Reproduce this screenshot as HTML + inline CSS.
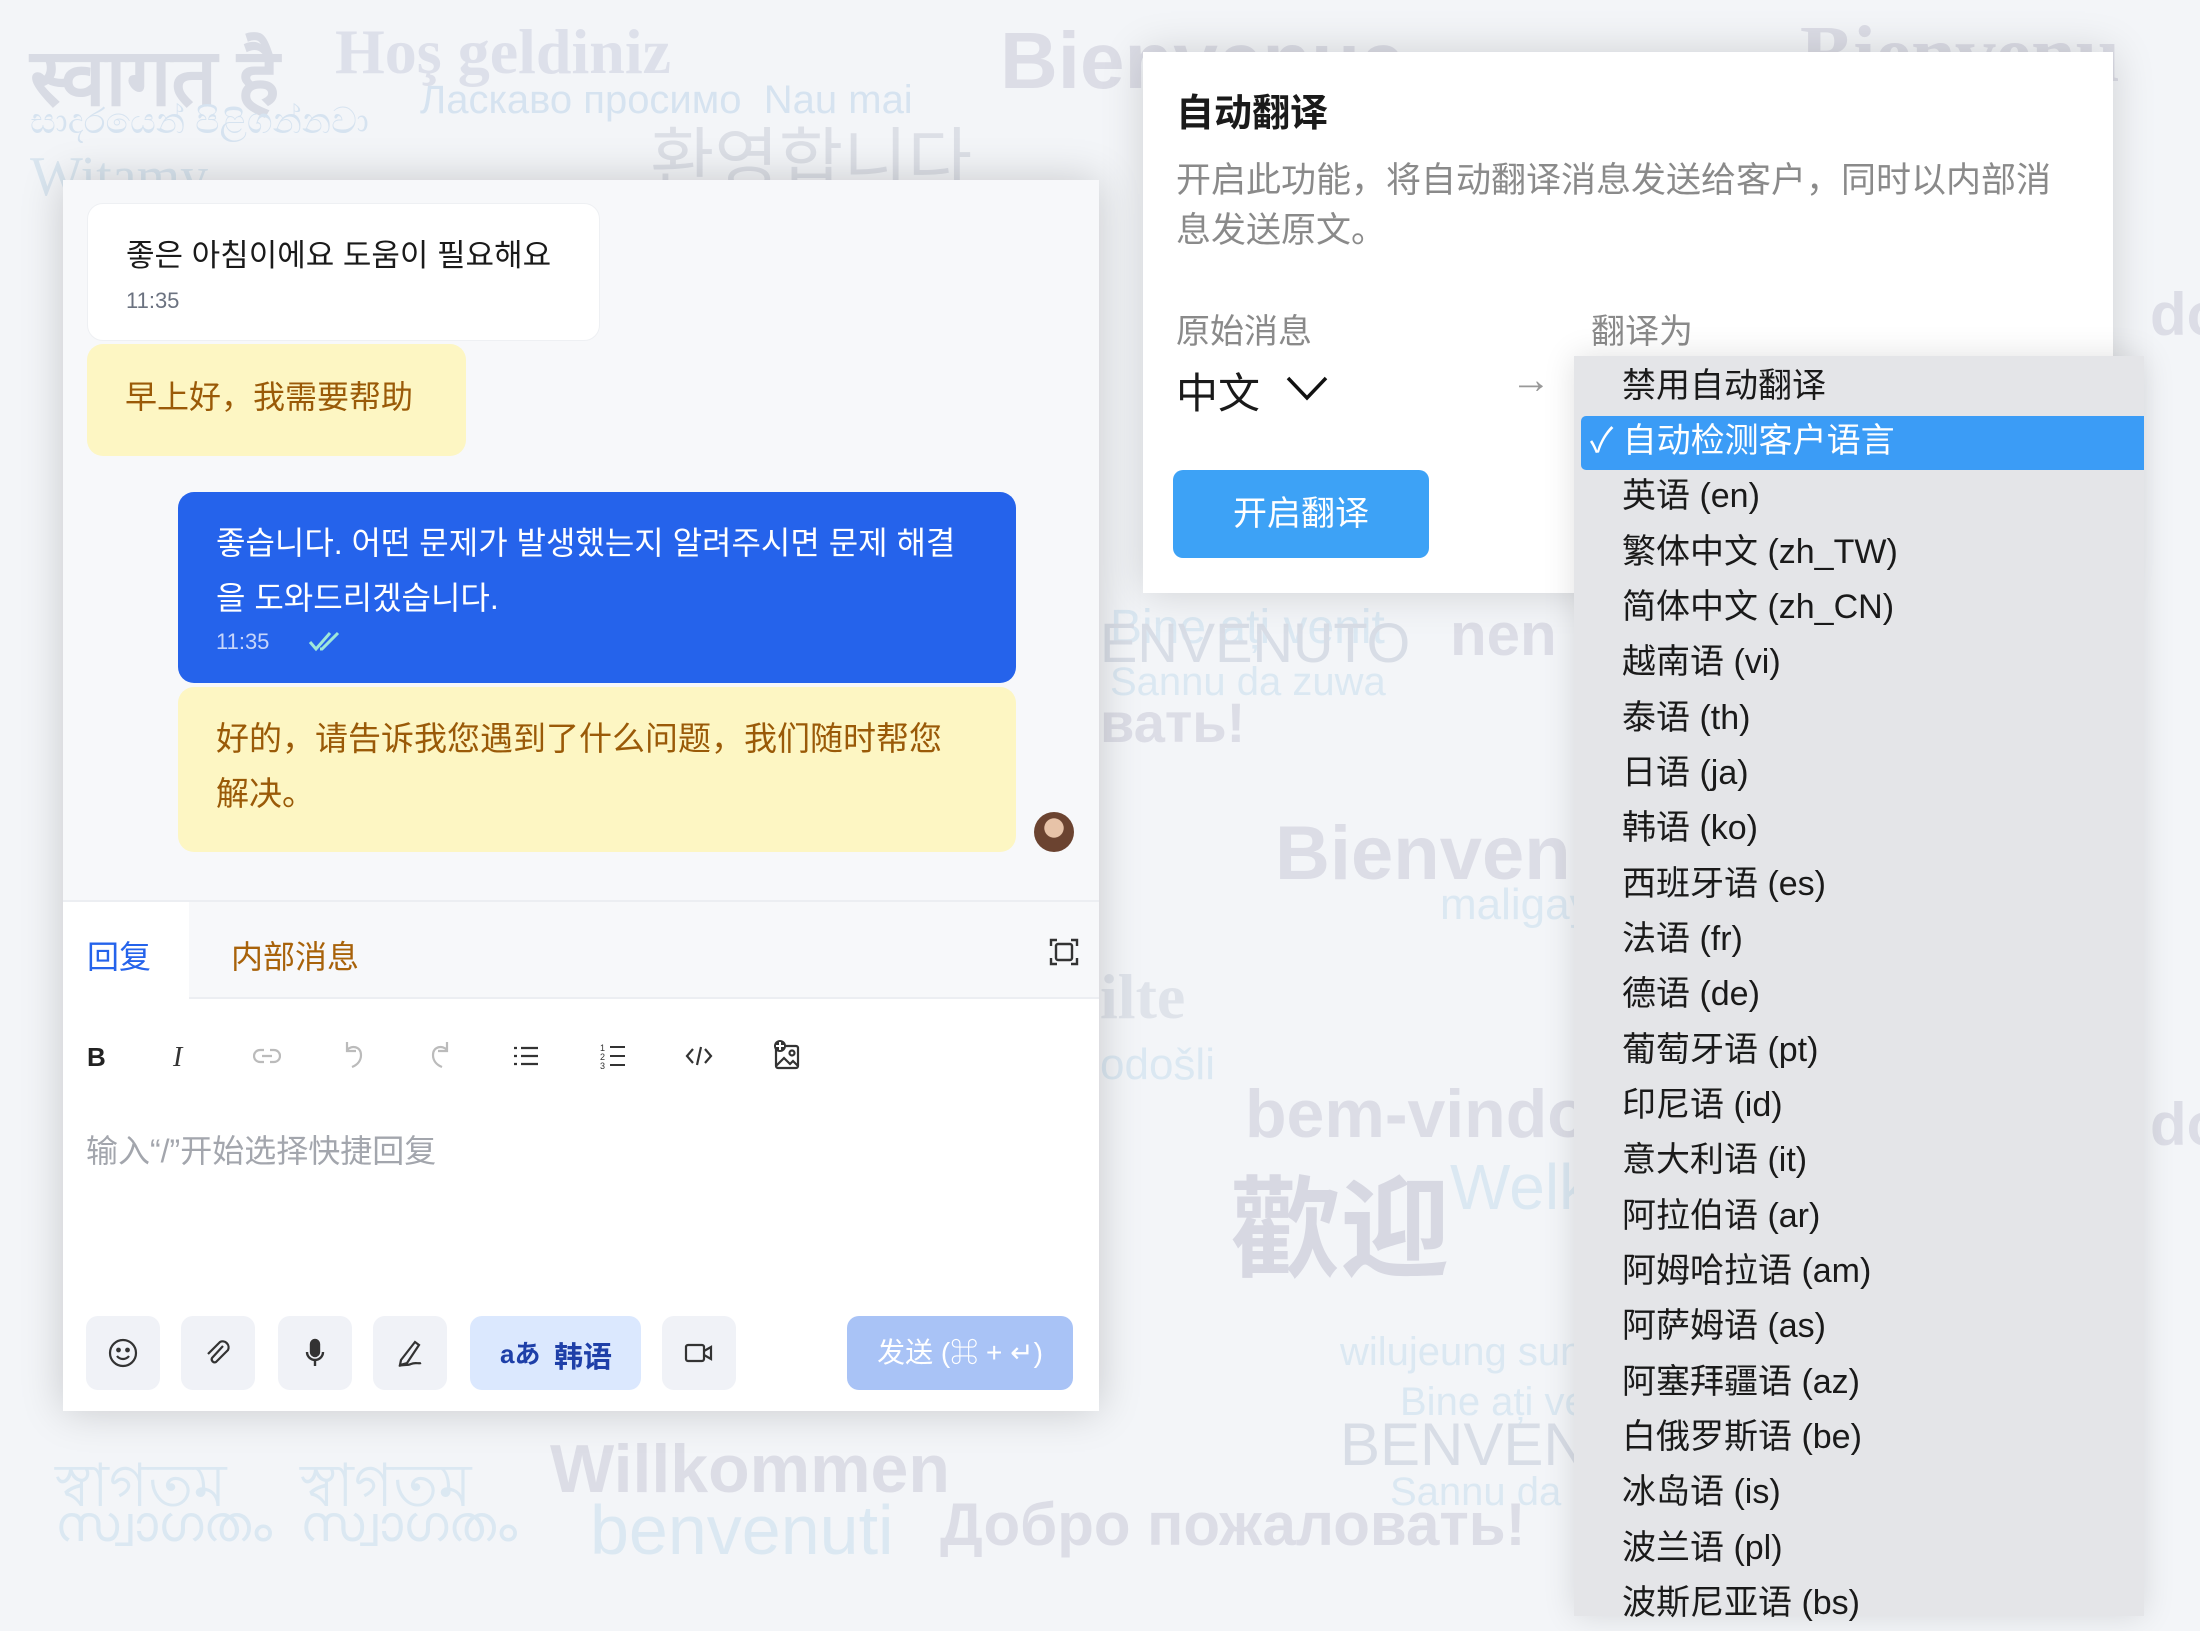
<!DOCTYPE html>
<html><head><meta charset="utf-8">
<style>
*{margin:0;padding:0;box-sizing:border-box}
body{width:2200px;height:1600px;overflow:hidden;background:#f3f5f8;font-family:"Liberation Sans","Noto Sans CJK SC",sans-serif;position:relative}
.bg{position:absolute;white-space:nowrap;font-weight:bold;color:#dfe2ea;font-family:"Liberation Serif","Noto Sans CJK SC",serif}
.bgs{position:absolute;white-space:nowrap;color:#dbe8f2;font-family:"Liberation Sans","Noto Sans CJK SC",sans-serif}
.abs{position:absolute}
.cn{font-family:"Liberation Sans","Noto Sans CJK SC",sans-serif}
.kr{font-family:"Liberation Sans","Noto Sans CJK KR",sans-serif}
.chat{position:absolute;left:63px;top:180px;width:1036px;height:1231px;background:#fff;box-shadow:0 0 40px rgba(0,0,0,.18)}
.msgs{position:absolute;left:0;top:0;width:1036px;height:722px;background:#f7f8fa;border-bottom:2px solid #eceef2}
.b{position:absolute;border-radius:16px}
.ib{position:absolute;top:1136px;width:74px;height:74px;border-radius:12px;background:#f0f2f7}
.ib svg{position:absolute;left:22px;top:22px}
.tb{position:absolute;top:862px}
.dd div{position:absolute;left:48px;height:55px;line-height:55px;font-size:34px;color:#1a1a1a;white-space:nowrap}
</style></head><body>
<div class="bg" style="left:30px;top:20px;font-size:80px;color:#d8dbe4">स्वागत है</div>
<div class="bg" style="left:335px;top:15px;font-size:64px;color:#dde0ea">Hoş geldiniz</div>
<div class="bg cn" style="left:1000px;top:15px;font-size:80px;color:#dcdde6">Bienvenue</div>
<div class="bgs" style="left:420px;top:78px;font-size:40px;color:#d6e3f0">Ласкаво просимо &nbsp;Nau mai</div>
<div class="bgs" style="left:30px;top:100px;font-size:36px;color:#d6e3f0">සාදරයෙන් පිළිගන්නවා</div>
<div class="bgs kr" style="left:650px;top:105px;font-size:70px;color:#dcdfe6">환영합니다</div>
<div class="bg" style="left:30px;top:145px;font-size:56px;color:#d9e5ef;font-weight:normal">Witamy</div>
<div class="bg" style="left:1800px;top:10px;font-size:80px;color:#dcdde6">Bienvenu</div>
<div class="bgs" style="left:1110px;top:600px;font-size:48px">Bine ați venit</div>
<div class="bgs" style="left:1100px;top:610px;font-size:56px;color:#d8dde6">ENVENUTO</div>
<div class="bgs" style="left:1110px;top:660px;font-size:40px">Sannu da zuwa</div>
<div class="bg" style="left:1100px;top:690px;font-size:56px;color:#dcdde6;font-family:'Liberation Sans'">вать!</div>
<div class="bg" style="left:1450px;top:600px;font-size:60px;color:#dcdde6;font-family:'Liberation Sans'">nen</div>
<div class="bg" style="left:1275px;top:810px;font-size:76px;color:#dcdde6;font-family:'Liberation Sans'">Bienven</div>
<div class="bgs" style="left:1440px;top:880px;font-size:44px">maligay</div>
<div class="bg" style="left:1100px;top:960px;font-size:64px;color:#dfe3ea">ilte</div>
<div class="bgs" style="left:1100px;top:1040px;font-size:44px">odošli</div>
<div class="bg" style="left:1245px;top:1075px;font-size:68px;color:#dcdde6;font-family:'Liberation Sans'">bem-vindo</div>
<div class="bg cn" style="left:1230px;top:1140px;font-size:110px;color:#d7d8e2">歡迎</div>
<div class="bgs" style="left:1450px;top:1150px;font-size:64px">Welk</div>
<div class="bgs" style="left:1340px;top:1330px;font-size:40px">wilujeung sun</div>
<div class="bgs" style="left:1400px;top:1380px;font-size:40px">Bine ați ve</div>
<div class="bgs" style="left:1340px;top:1410px;font-size:60px;color:#d8dde6">BENVENU</div>
<div class="bgs" style="left:1390px;top:1470px;font-size:40px">Sannu da</div>
<div class="bg" style="left:940px;top:1490px;font-size:60px;color:#dcdde6;font-family:'Liberation Sans'">Добро пожаловать!</div>
<div class="bg" style="left:550px;top:1430px;font-size:68px;color:#dcdde6;font-family:'Liberation Sans'">Willkommen</div>
<div class="bgs" style="left:590px;top:1490px;font-size:70px">benvenuti</div>
<div class="bgs" style="left:55px;top:1440px;font-size:60px">স্বাগতম</div>
<div class="bgs" style="left:55px;top:1495px;font-size:50px">സ്വാഗതം</div>
<div class="bgs" style="left:300px;top:1440px;font-size:60px">স্বাগতম</div>
<div class="bgs" style="left:300px;top:1495px;font-size:50px">സ്വാഗതം</div>
<div class="bg" style="left:2150px;top:280px;font-size:60px;color:#dcdde6;font-family:'Liberation Sans'">do</div>
<div class="bg" style="left:2150px;top:1090px;font-size:60px;color:#dcdde6;font-family:'Liberation Sans'">do</div>

<div class="chat">
 <div class="msgs">
  <div class="b" style="left:24px;top:23px;width:513px;height:138px;background:#fff;border:1px solid #eef0f3">
   <div class="abs kr" style="left:38px;top:26px;font-size:31px;color:#1a1a1a;white-space:nowrap">좋은 아침이에요 도움이 필요해요</div>
   <div class="abs" style="left:38px;top:84px;font-size:22px;color:#6b7280">11:35</div>
  </div>
  <div class="b" style="left:24px;top:164px;width:379px;height:112px;background:#fdf6c3">
   <div class="abs cn" style="left:38px;top:28px;font-size:32px;color:#9a5a08;white-space:nowrap">早上好，我需要帮助</div>
  </div>
  <div class="b" style="left:115px;top:312px;width:838px;height:191px;background:#2563eb">
   <div class="abs kr" style="left:38px;top:24px;width:740px;font-size:32px;line-height:55px;color:#fff">좋습니다. 어떤 문제가 발생했는지 알려주시면 문제 해결을 도와드리겠습니다.</div>
   <div class="abs" style="left:38px;top:137px;font-size:22px;color:#c7d6fb">11:35</div>
   <svg class="abs" style="left:130px;top:138px" width="36" height="24" viewBox="0 0 36 24"><path d="M2 12 L8 19 L22 3 M12 19 L14 19 L30 3" stroke="#9ee7d9" stroke-width="3" fill="none"/></svg>
  </div>
  <div class="b" style="left:115px;top:507px;width:838px;height:165px;background:#fdf6c3">
   <div class="abs cn" style="left:38px;top:24px;width:750px;font-size:33px;line-height:55px;color:#9a5a08">好的，请告诉我您遇到了什么问题，我们随时帮您解决。</div>
  </div>
  <div class="abs" style="left:971px;top:632px;width:40px;height:40px;border-radius:50%;background:radial-gradient(circle at 50% 40%,#e7c3a8 0 30%,#6b4330 32% 100%)"></div>
 </div>
 <div class="abs" style="left:0;top:722px;width:1036px;height:97px;background:#f7f8fa;border-bottom:2px solid #eceef2"></div>
 <div class="abs" style="left:0;top:722px;width:126px;height:99px;background:#fff"></div>
 <div class="abs cn" style="left:24px;top:752px;font-size:32px;color:#2563eb">回复</div>
 <div class="abs cn" style="left:168px;top:752px;font-size:32px;color:#a8620a">内部消息</div>
 <svg class="abs" style="left:986px;top:757px" width="30" height="30" viewBox="0 0 30 30" fill="none" stroke="#333" stroke-width="2.4"><path d="M2 9V3h6M22 3h6v6M28 21v6h-6M8 27H2v-6"/><rect x="7" y="7" width="16" height="16" rx="2"/></svg>
 <div class="tb" style="left:24px;font-size:26px;font-weight:bold;color:#222">B</div>
 <div class="tb" style="left:110px;font-size:28px;font-style:italic;color:#333;font-family:'Liberation Serif'">I</div>
 <svg class="tb" style="left:190px;top:864px" width="28" height="24" viewBox="0 0 28 24" fill="none" stroke="#bbb" stroke-width="2.2"><path d="M11 6H7a6 6 0 0 0 0 12h4M17 6h4a6 6 0 0 1 0 12h-4M9 12h10"/></svg>
 <svg class="tb" style="left:278px;top:860px" width="26" height="30" viewBox="0 0 26 30" fill="none" stroke="#bbb" stroke-width="2.2"><path d="M6 2v9h9M6 10C10 5 20 6 20 15c0 6-4 10-9 12"/></svg>
 <svg class="tb" style="left:364px;top:860px" width="26" height="30" viewBox="0 0 26 30" fill="none" stroke="#bbb" stroke-width="2.2"><path d="M20 2v9h-9M20 10C16 5 6 6 6 15c0 6 4 10 9 12"/></svg>
 <svg class="tb" style="left:450px;top:864px" width="26" height="24" viewBox="0 0 26 24" fill="none" stroke="#333" stroke-width="2.2"><path d="M8 4h17M8 12h17M8 20h17M1 4h3M1 12h3M1 20h3"/></svg>
 <svg class="tb" style="left:537px;top:862px" width="26" height="28" viewBox="0 0 26 28" fill="none" stroke="#333" stroke-width="2"><path d="M10 5h15M10 14h15M10 23h15"/><text x="0" y="9" font-size="9" fill="#333" stroke="none">1</text><text x="0" y="18" font-size="9" fill="#333" stroke="none">2</text><text x="0" y="27" font-size="9" fill="#333" stroke="none">3</text></svg>
 <svg class="tb" style="left:622px;top:864px" width="28" height="24" viewBox="0 0 28 24" fill="none" stroke="#333" stroke-width="2.2"><path d="M8 5L2 12l6 7M20 5l6 7-6 7M16 3l-4 18"/></svg>
 <svg class="tb" style="left:710px;top:860px" width="28" height="30" viewBox="0 0 28 30" fill="none" stroke="#333" stroke-width="2.2"><rect x="3" y="6" width="22" height="22" rx="2"/><path d="M3 26l8-8 6 6 3-3 5 5"/><circle cx="19" cy="13" r="2.5"/><circle cx="7" cy="6" r="6" fill="#333" stroke="none"/><path d="M7 2v8M3 6h8" stroke="#fff" stroke-width="2"/></svg>
 <div class="abs cn" style="left:23px;top:946px;font-size:32px;color:#a3a6ad">输入“/”开始选择快捷回复</div>
 <div class="ib" style="left:23px"><svg width="30" height="30" viewBox="0 0 30 30" fill="none" stroke="#333" stroke-width="2.2"><circle cx="15" cy="15" r="13"/><circle cx="10.5" cy="12" r="1.3" fill="#333"/><circle cx="19.5" cy="12" r="1.3" fill="#333"/><path d="M9 18c3 4 9 4 12 0"/></svg></div>
 <div class="ib" style="left:118px"><svg width="30" height="30" viewBox="0 0 30 30" fill="none" stroke="#333" stroke-width="2.2"><path d="M20 8L9 20a3 3 0 0 0 4 4l12-12a6 6 0 0 0-8-8L5 16"/></svg></div>
 <div class="ib" style="left:215px"><svg width="30" height="30" viewBox="0 0 30 30" fill="none" stroke="#333" stroke-width="2.4"><rect x="11" y="2" width="8" height="16" rx="4" fill="#333"/><path d="M7 14a8 8 0 0 0 16 0M15 22v6"/></svg></div>
 <div class="ib" style="left:310px"><svg width="30" height="30" viewBox="0 0 30 30" fill="none" stroke="#333" stroke-width="2.2"><path d="M6 22L20 4l4 3-12 18-7 2zM4 28c4-2 8 0 12-2s8 0 10-1"/></svg></div>
 <div class="abs" style="left:407px;top:1136px;width:171px;height:74px;border-radius:12px;background:#dbe8fe"><span class="abs" style="left:30px;top:18px;font-size:26px;font-weight:bold;color:#1e3fa8;font-family:'Liberation Sans','Noto Sans CJK JP',sans-serif">aあ</span><span class="abs cn" style="left:84px;top:18px;font-size:29px;font-weight:bold;color:#1e3fa8">韩语</span></div>
 <div class="ib" style="left:599px"><svg width="30" height="30" viewBox="0 0 30 30" fill="none" stroke="#333" stroke-width="2.2"><rect x="2" y="7" width="18" height="16" rx="2"/><path d="M20 13l7-4v12l-7-4"/></svg></div>
 <div class="abs" style="left:784px;top:1136px;width:226px;height:74px;border-radius:12px;background:#a9c3f6;color:#fff;font-size:28px;line-height:74px;text-align:center"><span class="cn">发送</span> (⌘ + ↵)</div>
</div>

<div class="abs" style="left:1143px;top:52px;width:970px;height:541px;background:#fff;box-shadow:0 0 40px rgba(0,0,0,.15)">
 <div class="abs cn" style="left:33px;top:30px;font-size:38px;font-weight:bold;color:#1a1a1a">自动翻译</div>
 <div class="abs cn" style="left:33px;top:104px;width:900px;font-size:35px;line-height:50px;color:#8a8a8a">开启此功能，将自动翻译消息发送给客户，同时以内部消息发送原文。</div>
 <div class="abs cn" style="left:33px;top:252px;font-size:34px;color:#8a8a8a">原始消息</div>
 <div class="abs cn" style="left:448px;top:252px;font-size:34px;color:#8a8a8a">翻译为</div>
 <div class="abs cn" style="left:33px;top:308px;font-size:42px;color:#1a1a1a">中文</div>
 <svg class="abs" style="left:142px;top:322px" width="44" height="28" viewBox="0 0 44 28" fill="none" stroke="#111" stroke-width="3.5"><path d="M3 4l19 20L41 4"/></svg>
 <div class="abs" style="left:368px;top:306px;font-size:40px;color:#999">→</div>
 <div class="abs cn" style="left:30px;top:418px;width:256px;height:88px;border-radius:10px;background:#3da2f6;color:#fff;font-size:34px;line-height:88px;text-align:center">开启翻译</div>
</div>

<div class="abs dd cn" style="left:1574px;top:356px;width:570px;height:1260px;background:#e4e5e8;box-shadow:0 0 30px rgba(0,0,0,.12)">
 <div class="abs" style="left:7px;top:60px;width:563px;height:54px;background:#3b9cf6;border-radius:5px 0 0 5px"></div>
 <div style="top:3px">禁用自动翻译</div>
 <div style="top:58px;color:#fff;left:16px">✓ 自动检测客户语言</div>
 <div style="top:113px">英语 (en)</div>
 <div style="top:169px">繁体中文 (zh_TW)</div>
 <div style="top:224px">简体中文 (zh_CN)</div>
 <div style="top:279px">越南语 (vi)</div>
 <div style="top:335px">泰语 (th)</div>
 <div style="top:390px">日语 (ja)</div>
 <div style="top:445px">韩语 (ko)</div>
 <div style="top:501px">西班牙语 (es)</div>
 <div style="top:556px">法语 (fr)</div>
 <div style="top:611px">德语 (de)</div>
 <div style="top:667px">葡萄牙语 (pt)</div>
 <div style="top:722px">印尼语 (id)</div>
 <div style="top:777px">意大利语 (it)</div>
 <div style="top:833px">阿拉伯语 (ar)</div>
 <div style="top:888px">阿姆哈拉语 (am)</div>
 <div style="top:943px">阿萨姆语 (as)</div>
 <div style="top:999px">阿塞拜疆语 (az)</div>
 <div style="top:1054px">白俄罗斯语 (be)</div>
 <div style="top:1109px">冰岛语 (is)</div>
 <div style="top:1165px">波兰语 (pl)</div>
 <div style="top:1220px">波斯尼亚语 (bs)</div>
</div>
</body></html>
